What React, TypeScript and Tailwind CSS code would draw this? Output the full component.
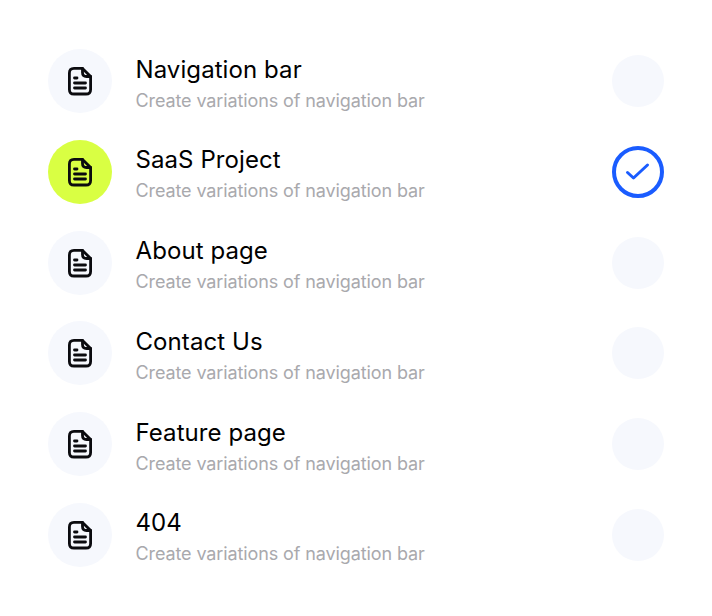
const items = [
  { title: 'Navigation bar', selected: false },
  { title: 'SaaS Project', selected: true },
  { title: 'About page', selected: false },
  { title: 'Contact Us', selected: false },
  { title: 'Feature page', selected: false },
  { title: '404', selected: false },
];

function DocIcon() {
  return (
    <svg width="26" height="30" viewBox="0 0 26 30" fill="none" stroke="#0b0b0f" strokeWidth="2.8" strokeLinecap="round" strokeLinejoin="round">
      <path d="M15.5 2.4H7C4.2 2.4 2.4 4.2 2.4 7V23.4C2.4 26.2 4.2 28 7 28H19C21.8 28 23.6 26.2 23.6 23.4V10.5L15.5 2.4Z" />
      <path d="M15.5 2.4V6.5C15.5 9 17.1 10.5 19.5 10.5H23.6" />
      <path d="M7.5 12H10" />
      <path d="M7.5 17H18.5" />
      <path d="M7.5 22H18.5" />
    </svg>
  );
}

export default function App() {
  return (
    <div className="w-[712px] h-[616px] bg-white pt-[49px] pl-[48px] pr-[48px] flex flex-col gap-[26.8px] font-['Inter',sans-serif]">
      {items.map((item) => (
        <div key={item.title} className="flex items-center h-[64px]">
          <div className={`w-[64px] h-[64px] rounded-full flex items-center justify-center shrink-0 ${item.selected ? 'bg-[#d9ff43]' : 'bg-[#f6f8fd]'}`}>
            <DocIcon />
          </div>
          <div className="ml-[23.5px] flex-1 pt-[6px]">
            <div className="text-[24px] leading-[32px] text-black tracking-[0.08px]">{item.title}</div>
            <div className="text-[18px] leading-[28px] text-[#a9a9ad] tracking-[-0.11px] mt-[1px]">Create variations of navigation bar</div>
          </div>
          {item.selected ? (
            <div className="w-[52px] h-[52px] rounded-full border-4 border-[#1a5cff] flex items-center justify-center">
              <svg width="26" height="20" viewBox="0 0 26 20" fill="none" stroke="#1a5cff" strokeWidth="3" strokeLinecap="round" strokeLinejoin="round">
                <path d="M2.5 10.5L8.5 16L22.5 3" />
              </svg>
            </div>
          ) : (
            <div className="w-[52px] h-[52px] rounded-full bg-[#f6f8fd]" />
          )}
        </div>
      ))}
    </div>
  );
}
